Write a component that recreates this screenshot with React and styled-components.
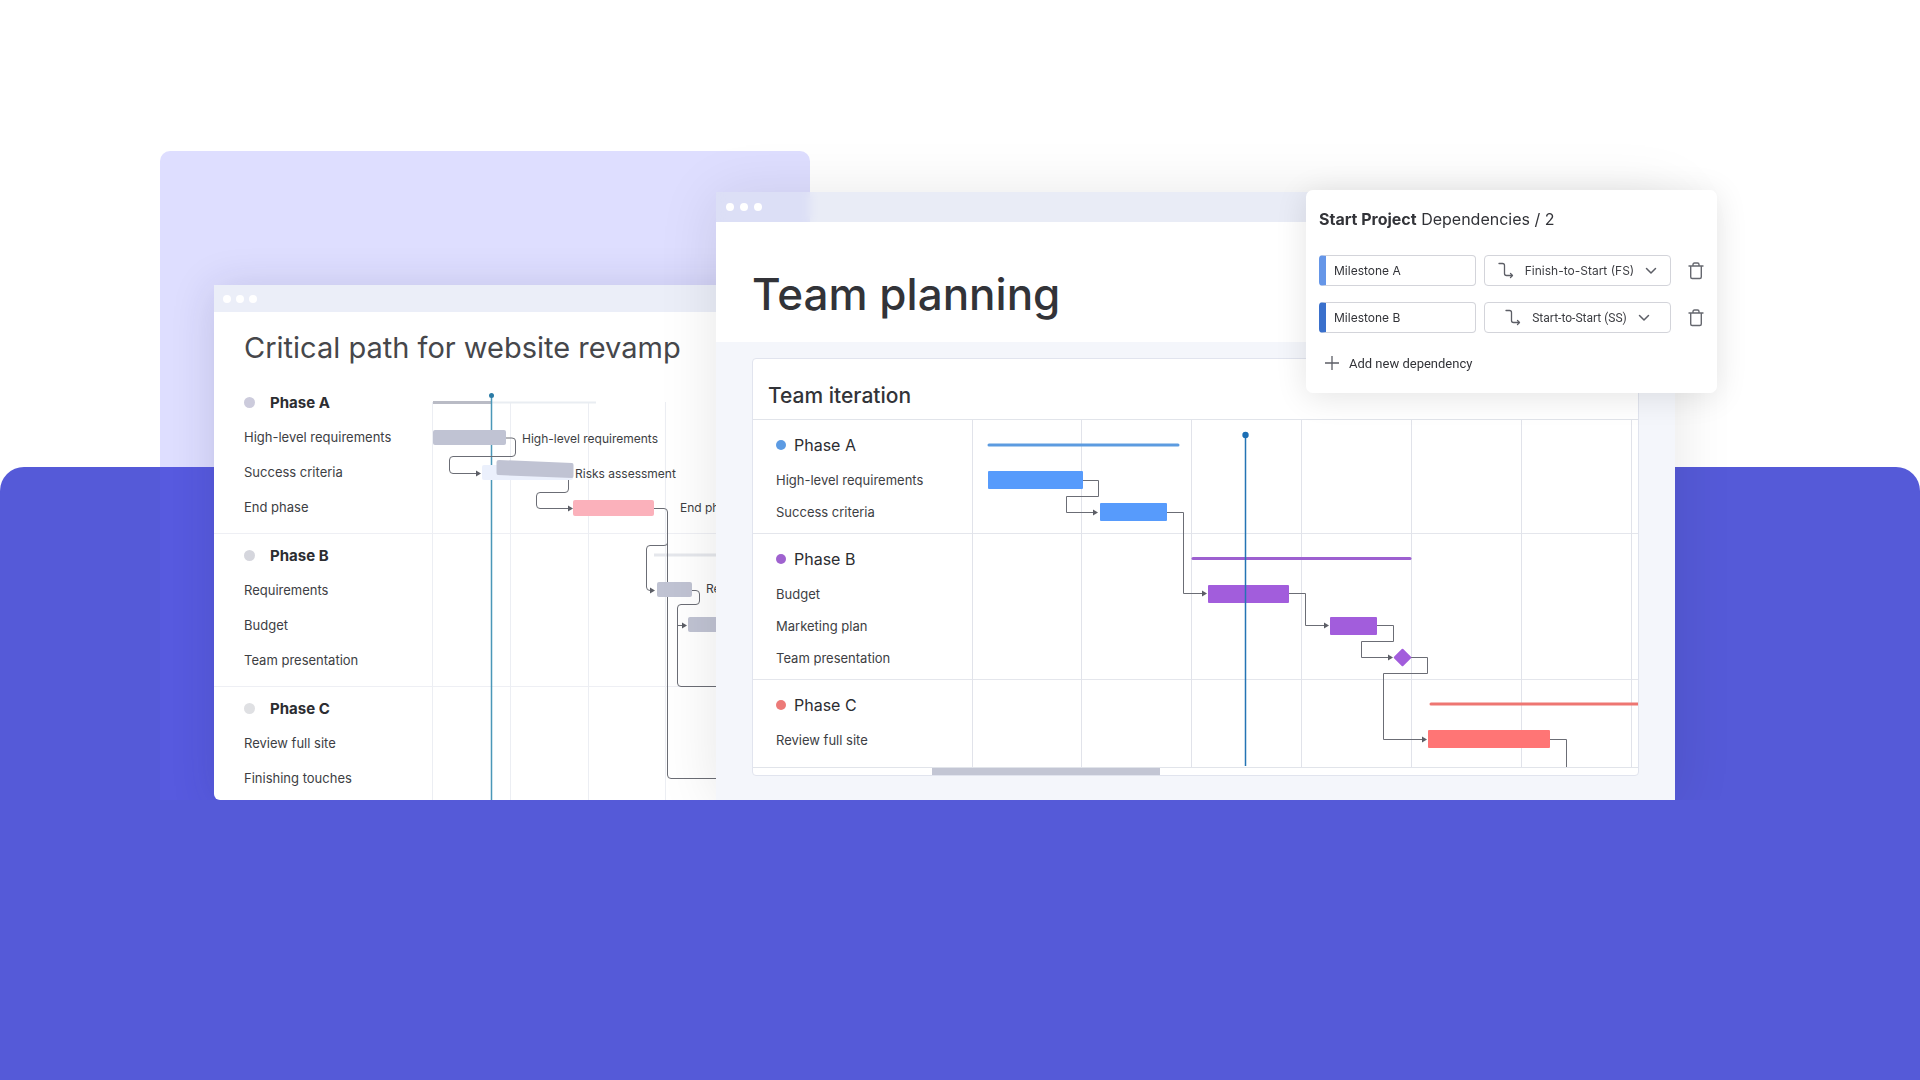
import React from "react";
import styled, { createGlobalStyle } from "styled-components";

const GlobalStyle = createGlobalStyle`
  *, *::before, *::after { box-sizing: border-box; }
  body { margin: 0; background: #fff; font-family: Inter, "Liberation Sans", sans-serif; color: #323338; }
  h1, h2, h3, ul { margin: 0; padding: 0; font-weight: 400; }
  ul { list-style: none; }
  button, input, select { font: inherit; color: inherit; }
`;

const Page = styled.main`
  display: grid;
  min-height: 100vh;
  overflow: hidden;
  grid-template-columns:
    minmax(0, 160fr) minmax(0, 54fr) minmax(0, 502fr) minmax(0, 94fr)
    minmax(0, 496fr) minmax(0, 369fr) minmax(0, 42fr) minmax(0, 203fr);
  grid-template-rows: auto minmax(0, 1fr);
`;

const Ground = styled.div`
  grid-area: 1 / 1 / -1 / -1;
  margin-top: 467px;
  border-radius: 24px 24px 0 0;
  background: #555ad8;
`;

const Floor = styled.div`
  grid-area: 2 / 1 / 3 / -1;
  background: #555ad8;
  z-index: 1;
`;

const Lilac = styled.div`
  grid-area: 1 / 2 / 2 / 5;
  margin-top: 151px;
  border-radius: 10px 10px 0 0;
  background: #dedeff;
`;

const LilacTint = styled.div`
  grid-area: 1 / 2 / 2 / 5;
  margin-top: 467px;
  background: rgba(92, 94, 240, 0.3);
`;

const Window = styled.section`
  display: flex;
  flex-direction: column;
`;

const BackWindow = styled(Window)`
  grid-area: 1 / 3 / 2 / 5;
  margin-top: 285px;
  border-radius: 2px 2px 6px 6px;
  background: #fff;
  box-shadow: 0 4px 44px rgba(40, 40, 90, 0.16);
`;

const FrontWindow = styled(Window)`
  grid-area: 1 / 4 / 2 / 7;
  margin-top: 192px;
  box-shadow: 0 4px 56px rgba(0, 0, 0, 0.1);
`;

const TitleBar = styled.div`
  display: flex;
  align-items: center;
  gap: ${(p) => (p.$glass ? 6 : 5)}px;
  height: ${(p) => (p.$glass ? 30 : 27)}px;
  padding-left: ${(p) => (p.$glass ? 10 : 9)}px;
  background: ${(p) => (p.$glass ? "rgba(219, 224, 240, 0.6)" : "#ebeef8")};
  backdrop-filter: ${(p) => (p.$glass ? "blur(5px)" : "none")};
`;

const WindowDot = styled.i`
  width: 8px;
  height: 8px;
  border-radius: 50%;
  background: #fff;
`;

const BackTitle = styled.h2`
  height: 69px;
  padding: 18px 30px 0;
  font-size: 29px;
  line-height: 36px;
  font-weight: 400;
  color: #46474b;
  white-space: nowrap;
`;

const FrontTitle = styled.h1`
  height: 120px;
  padding: 47px 36px 0;
  background: #fff;
  font-size: 44px;
  line-height: 50px;
  font-weight: 500;
  white-space: nowrap;
`;

const FrontBody = styled.div`
  flex: 1;
  padding: 16px 36px 24px;
  background: #f4f6fb;
`;

const Card = styled.div`
  overflow: hidden;
  border: 1px solid #e1e4ee;
  border-radius: 4px;
  background: #fff;
`;

const CardTitle = styled.h2`
  height: 61px;
  padding: 22px 15px 0;
  border-bottom: 1px solid #e1e4ea;
  font-size: 21px;
  line-height: 30px;
  font-weight: 500;
`;

const Plot = styled.div`
  display: grid;
  flex: 1;
  grid-template-columns: 219px minmax(0, 1fr);
`;

const Groups = styled.div`
  grid-area: 1 / 1 / 2 / -1;
`;

const Chart = styled.svg`
  grid-area: 1 / 2 / 2 / 3;
  width: 100%;
  height: 100%;
  overflow: ${(p) => (p.$spill ? "visible" : "hidden")};
`;

const BackGroup = styled.div`
  padding: 4px 30px 8px;
  border-bottom: 1px solid #eeeff4;
  &:last-child { padding-bottom: 0; border-bottom: 0; }
`;

const FrontGroup = styled.div`
  padding: 9px 23px 5px;
  border-bottom: 1px solid #e4e6ec;
  &:last-child { padding-bottom: 11px; border-bottom: 0; }
`;

const Phase = styled.h3`
  display: flex;
  align-items: center;
  gap: ${(p) => (p.$bold ? 15 : 8)}px;
  height: ${(p) => (p.$bold ? 35 : 32)}px;
  margin-bottom: ${(p) => (p.$bold ? 0 : 3)}px;
  font-size: ${(p) => (p.$bold ? 15 : 16)}px;
  font-weight: ${(p) => (p.$bold ? 700 : 400)};
  color: #2c2d31;
  &::before {
    content: "";
    width: ${(p) => (p.$bold ? 11 : 10)}px;
    height: ${(p) => (p.$bold ? 11 : 10)}px;
    border-radius: 50%;
    background: ${(p) => p.$dot};
  }
`;

const Task = styled.li`
  height: ${(p) => p.$h}px;
  font-size: 13px;
  line-height: ${(p) => p.$h}px;
  white-space: nowrap;
  color: #3d3e43;
`;

const ScrollTrack = styled.div`
  display: flex;
  justify-content: flex-start;
  height: 8px;
  border-top: 1px solid #e1e4ea;
  padding-left: 179px;
`;

const ScrollThumb = styled.div`
  width: 228px;
  background: #c3c6d4;
`;

const Popup = styled.form`
  grid-area: 1 / 6 / 2 / 8;
  align-self: start;
  margin-top: 190px;
  padding: 14px 13px 16px;
  border-radius: 7px;
  background: #fff;
  box-shadow: 0 4px 32px rgba(0, 0, 0, 0.11);
  display: flex;
  flex-direction: column;
  gap: 16px;
  z-index: 1;
`;

const PopupTitle = styled.h2`
  margin-bottom: 5px;
  font-size: 16px;
  line-height: 30px;
  white-space: nowrap;
  b { font-weight: 700; }
`;

const DependencyRow = styled.div`
  display: grid;
  grid-template-columns: minmax(0, 157fr) minmax(0, 187fr) 34px;
  column-gap: 8px;
  height: 31px;
  margin-right: -9px;
`;

const NameInput = styled.input`
  min-width: 0;
  padding: 0 0 0 8px;
  border: 1px solid #d3d4da;
  border-left: 7px solid ${(p) => p.$accent};
  border-radius: 4px;
  background: #fff;
  font-size: 12px;
  outline: none;
`;

const TypeBox = styled.label`
  display: flex;
  align-items: center;
  justify-content: center;
  gap: 11px;
  border: 1px solid #d3d4da;
  border-radius: 4px;
  color: #3d3e43;
  svg { flex: none; }
`;

const TypeSelect = styled.select`
  appearance: none;
  field-sizing: content;
  margin: 0;
  padding: 0;
  border: 0;
  background: transparent;
  outline: none;
  font-size: 12px;
  font-family: ${(p) => (p.$narrow ? "Roboto" : "Inter")}, sans-serif;
`;

const IconButton = styled.button`
  display: flex;
  align-items: center;
  justify-content: center;
  padding: 0;
  border: 0;
  background: none;
  color: #66686f;
`;

const AddButton = styled.button`
  display: flex;
  align-items: center;
  align-self: flex-start;
  gap: 10px;
  height: 28px;
  padding: 0 6px;
  border: 0;
  background: none;
  font-family: Roboto, sans-serif;
  font-size: 13px;
`;

const wire = { fill: "none", stroke: "#6b6d75", strokeWidth: 1 };

function Arrow({ x, y }) {
  return <path d={`M${x - 5} ${y - 3}L${x} ${y}L${x - 5} ${y + 3}Z`} fill="#5c5e66" />;
}

function Dots() {
  return (
    <>
      <WindowDot />
      <WindowDot />
      <WindowDot />
    </>
  );
}

const backGroups = [
  { name: "Phase A", dot: "#cccbdc", tasks: ["High-level requirements", "Success criteria", "End phase"] },
  { name: "Phase B", dot: "#d5d6dd", tasks: ["Requirements", "Budget", "Team presentation"] },
  { name: "Phase C", dot: "#dfe0e3", tasks: ["Review full site", "Finishing touches"] },
];

const frontGroups = [
  { name: "Phase A", dot: "#5c9be3", tasks: ["High-level requirements", "Success criteria"] },
  { name: "Phase B", dot: "#9f62cf", tasks: ["Budget", "Marketing plan", "Team presentation"] },
  { name: "Phase C", dot: "#ec7a78", tasks: ["Review full site"] },
];

function BackChart() {
  const label = { fontSize: 12, fill: "#3d3e43" };
  return (
    <Chart $spill role="img" aria-label="Critical path timeline">
      {[0, 78, 156, 233].map((x) => (
        <path key={x} d={`M${x - 0.5} 21V419`} stroke="#eceef3" />
      ))}
      <path d="M58 21.5H163" stroke="#e9edf2" strokeWidth="2" />
      <path d="M0 21.5H58" stroke="#b9bbc5" strokeWidth="3" />
      <path d="M221 174H290" stroke="#e5e7ec" strokeWidth="3" />
      <path d="M58.5 15V419" stroke="#4a97b8" strokeWidth="1.500" />
      <circle cx="58.5" cy="14.5" r="2.5" fill="#2b7ba6" />
      <g {...wire}>
        <path d="M73 57H79Q82.500 57 82.500 60V72Q82.500 75.500 79 75.500H20Q16.500 75.500 16.500 79V89Q16.500 92.500 20 92.500H45" />
        <path d="M135.500 97V108Q135.500 111.500 132 111.500H107Q103.500 111.500 103.500 115V124Q103.500 127.500 107 127.500H136" />
        <path d="M221 127.500H231Q234.500 127.500 234.500 131V394Q234.500 397.500 238 397.500H300" />
        <path d="M234.500 162Q234.500 164.500 231 164.500H217Q213.500 164.500 213.500 168V206Q213.500 209.500 217 209.500H218" />
        <path d="M259 209.500H263Q266.500 209.500 266.500 213V220Q266.500 223.500 263 223.500H248Q244.500 223.500 244.500 227V302Q244.500 305.500 248 305.500H300" />
        <path d="M244.500 244.500H250" />
      </g>
      <Arrow x={48} y={92.5} />
      <Arrow x={140} y={127.5} />
      <Arrow x={222} y={209.5} />
      <Arrow x={254} y={244.5} />
      <rect x="0" y="49" width="73" height="15" rx="2" fill="#c0c3d3" />
      <rect x="49" y="84" width="91" height="15" rx="2" fill="#ebf0fc" />
      <path d="M66 79L139 82Q140.500 82 140.500 84V95Q140.500 97 139 97L65 94Q63.500 94 63.500 92V81Q63.500 79 66 79Z" fill="#c0c3d3" />
      <rect x="140" y="119" width="81" height="16" rx="2" fill="#fbb1bb" />
      <rect x="224" y="201" width="35" height="15" rx="2" fill="#c0c3d3" />
      <rect x="255" y="236" width="60" height="15" rx="2" fill="#c0c3d3" />
      <text x="89" y="62" {...label}>High-level requirements</text>
      <text x="142" y="97" {...label}>Risks assessment</text>
      <text x="247" y="131" {...label}>End phase</text>
      <text x="273" y="212" {...label}>Review</text>
    </Chart>
  );
}

function FrontChart() {
  return (
    <Chart role="img" aria-label="Team iteration timeline">
      {[1, 110, 220, 330, 440, 550, 660].map((x) => (
        <path key={x} d={`M${x - 0.5} 0V347`} stroke="#e1e3ea" />
      ))}
      <g strokeWidth="3" strokeLinecap="round">
        <path d="M17 25H206" stroke="#5c9be0" />
        <path d="M221 138.500H438" stroke="#9d60d0" />
        <path d="M459 284H680" stroke="#ee7672" />
      </g>
      <g {...wire}>
        <path d="M110 60.500H126.500V76.500H94.500V92.500H122" />
        <path d="M195 92.500H211.500V173.500H231" />
        <path d="M317 173.500H333.500V205.500H352" />
        <path d="M405 205.500H421.500V221.500H389.500V237.500H416" />
        <path d="M439 237.500H455.500V253.500H411.500V319.500H451" />
        <path d="M578 319.500H594.500V347" />
      </g>
      <Arrow x={126} y={92.5} />
      <Arrow x={235} y={173.5} />
      <Arrow x={357} y={205.5} />
      <Arrow x={421} y={237.5} />
      <Arrow x={455} y={319.5} />
      <rect x="16" y="51" width="95" height="18" rx="1" fill="#579bfc" />
      <rect x="128" y="83" width="67" height="18" rx="1" fill="#579bfc" />
      <rect x="236" y="165" width="81" height="18" rx="1" fill="#a25ddc" />
      <rect x="358" y="197" width="47" height="18" rx="1" fill="#a25ddc" />
      <rect x="424" y="231" width="13" height="13" rx="1" fill="#a25ddc" transform="rotate(45 430.500 237.500)" />
      <rect x="456" y="310" width="122" height="18" rx="1" fill="#ff7575" />
      <path d="M273.500 16V346" stroke="#2474b4" strokeWidth="1.500" />
      <circle cx="273.500" cy="15" r="3.200" fill="#1c6fb5" />
    </Chart>
  );
}

function LinkIcon() {
  return (
    <svg width="16" height="17" viewBox="0 0 16 17" fill="none" stroke="#5c5e66" strokeWidth="1.300" strokeLinecap="round" strokeLinejoin="round" aria-hidden="true">
      <path d="M1 1.500H4.500Q6.500 1.500 6.500 3.500V11.500Q6.500 13.500 8.500 13.500H14" />
      <path d="M12.500 11.500L14.500 13.500L12.500 15.500" />
    </svg>
  );
}

function ChevronIcon() {
  return (
    <svg width="12" height="8" viewBox="0 0 12 8" fill="none" stroke="#5c5e66" strokeWidth="1.500" strokeLinecap="round" strokeLinejoin="round" aria-hidden="true">
      <path d="M1.500 1.500L6 6L10.500 1.500" />
    </svg>
  );
}

function TrashIcon() {
  return (
    <svg width="16" height="18" viewBox="0 0 16 18" fill="none" stroke="currentColor" strokeWidth="1.400" strokeLinecap="round" strokeLinejoin="round" aria-hidden="true">
      <path d="M1 4H15M5 4V2.500Q5 1 6.500 1H9.500Q11 1 11 2.500V4M2.700 4V15Q2.700 16.500 4.200 16.500H11.800Q13.300 16.500 13.300 15V4" />
    </svg>
  );
}

const types = ["Finish-to-Start (FS)", "Start-to-Start (SS)"];
const dependencies = [
  { name: "Milestone A", type: types[0], accent: "#6596e8" },
  { name: "Milestone B", type: types[1], accent: "#3a70cc", narrow: true },
];

export default function App() {
  return (
    <>
      <GlobalStyle />
      <Page>
        <Lilac />
        <Ground />
        <LilacTint />
        <BackWindow>
          <TitleBar><Dots /></TitleBar>
          <BackTitle>Critical path for website revamp</BackTitle>
          <Plot>
            <Groups>
              {backGroups.map((g) => (
                <BackGroup key={g.name}>
                  <Phase $bold $dot={g.dot}>{g.name}</Phase>
                  <ul>{g.tasks.map((t) => <Task key={t} $h={35}>{t}</Task>)}</ul>
                </BackGroup>
              ))}
            </Groups>
            <BackChart />
          </Plot>
        </BackWindow>
        <FrontWindow>
          <TitleBar $glass><Dots /></TitleBar>
          <FrontTitle>Team planning</FrontTitle>
          <FrontBody>
            <Card>
              <CardTitle>Team iteration</CardTitle>
              <Plot>
                <Groups>
                  {frontGroups.map((g) => (
                    <FrontGroup key={g.name}>
                      <Phase $dot={g.dot}>{g.name}</Phase>
                      <ul>{g.tasks.map((t) => <Task key={t} $h={32}>{t}</Task>)}</ul>
                    </FrontGroup>
                  ))}
                </Groups>
                <FrontChart />
              </Plot>
              <ScrollTrack><ScrollThumb /></ScrollTrack>
            </Card>
          </FrontBody>
        </FrontWindow>
        <Floor />
        <Popup onSubmit={(e) => e.preventDefault()}>
          <PopupTitle><b>Start Project</b> Dependencies / 2</PopupTitle>
          {dependencies.map((d) => (
            <DependencyRow key={d.name}>
              <NameInput aria-label="Dependency" defaultValue={d.name} $accent={d.accent} />
              <TypeBox>
                <LinkIcon />
                <TypeSelect aria-label={`Type for ${d.name}`} defaultValue={d.type} $narrow={d.narrow}>
                  {types.map((t) => <option key={t}>{t}</option>)}
                </TypeSelect>
                <ChevronIcon />
              </TypeBox>
              <IconButton type="button" aria-label={`Delete ${d.name}`}><TrashIcon /></IconButton>
            </DependencyRow>
          ))}
          <AddButton type="button">
            <svg width="14" height="14" viewBox="0 0 14 14" stroke="#5c5e66" strokeWidth="1.300" aria-hidden="true">
              <path d="M7 0V14M0 7H14" />
            </svg>
            Add new dependency
          </AddButton>
        </Popup>
      </Page>
    </>
  );
}
